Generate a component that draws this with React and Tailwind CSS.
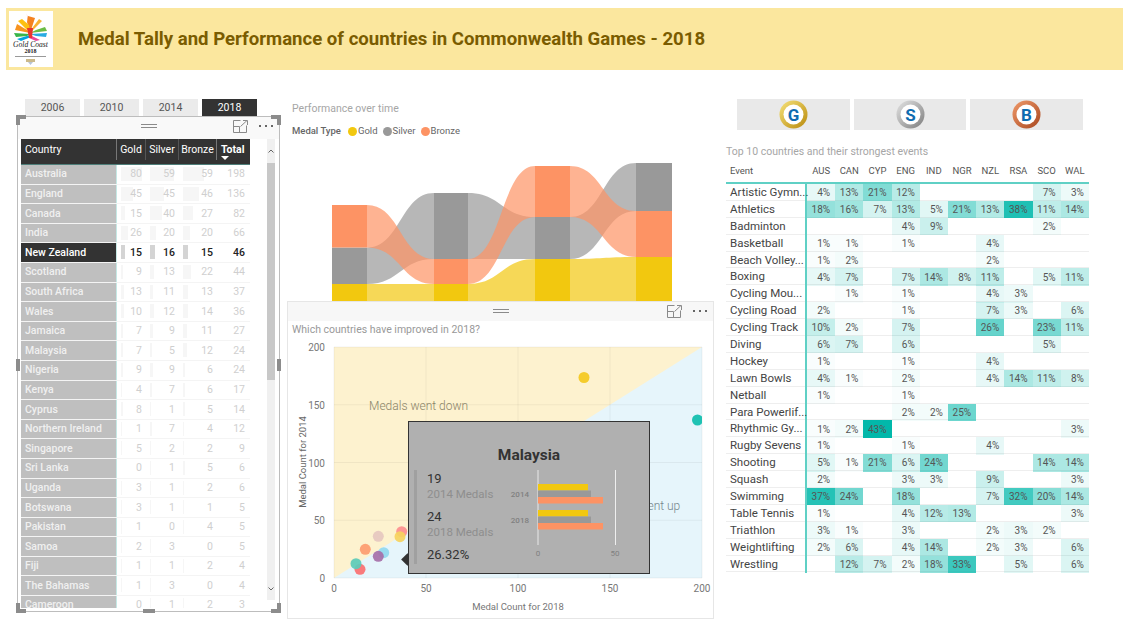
import React from "react";

const countries = [
  ["Australia", 80, 59, 59, 198], ["England", 45, 45, 46, 136], ["Canada", 15, 40, 27, 82],
  ["India", 26, 20, 20, 66], ["New Zealand", 15, 16, 15, 46], ["Scotland", 9, 13, 22, 44],
  ["South Africa", 13, 11, 13, 37], ["Wales", 10, 12, 14, 36], ["Jamaica", 7, 9, 11, 27],
  ["Malaysia", 7, 5, 12, 24], ["Nigeria", 9, 9, 6, 24], ["Kenya", 4, 7, 6, 17],
  ["Cyprus", 8, 1, 5, 14], ["Northern Ireland", 1, 7, 4, 12], ["Singapore", 5, 2, 2, 9],
  ["Sri Lanka", 0, 1, 5, 6], ["Uganda", 3, 1, 2, 6], ["Botswana", 3, 1, 1, 5],
  ["Pakistan", 1, 0, 4, 5], ["Samoa", 2, 3, 0, 5], ["Fiji", 1, 1, 2, 4],
  ["The Bahamas", 1, 3, 0, 4], ["Cameroon", 0, 1, 2, 3],
];

const codes = ["AUS", "CAN", "CYP", "ENG", "IND", "NGR", "NZL", "RSA", "SCO", "WAL"];

const events = [
  ["Artistic Gymn...", 4, 13, 21, 12, 0, 0, 0, 0, 7, 3],
  ["Athletics", 18, 16, 7, 13, 5, 21, 13, 38, 11, 14],
  ["Badminton", 0, 0, 0, 4, 9, 0, 0, 0, 2, 0],
  ["Basketball", 1, 1, 0, 1, 0, 0, 4, 0, 0, 0],
  ["Beach Volley...", 1, 2, 0, 0, 0, 0, 2, 0, 0, 0],
  ["Boxing", 4, 7, 0, 7, 14, 8, 11, 0, 5, 11],
  ["Cycling Mou...", 0, 1, 0, 1, 0, 0, 4, 3, 0, 0],
  ["Cycling Road", 2, 0, 0, 1, 0, 0, 7, 3, 0, 6],
  ["Cycling Track", 10, 2, 0, 7, 0, 0, 26, 0, 23, 11],
  ["Diving", 6, 7, 0, 6, 0, 0, 0, 0, 5, 0],
  ["Hockey", 1, 0, 0, 1, 0, 0, 4, 0, 0, 0],
  ["Lawn Bowls", 4, 1, 0, 2, 0, 0, 4, 14, 11, 8],
  ["Netball", 1, 0, 0, 1, 0, 0, 0, 0, 0, 0],
  ["Para Powerlif...", 0, 0, 0, 2, 2, 25, 0, 0, 0, 0],
  ["Rhythmic Gy...", 1, 2, 43, 0, 0, 0, 0, 0, 0, 3],
  ["Rugby Sevens", 1, 0, 0, 1, 0, 0, 4, 0, 0, 0],
  ["Shooting", 5, 1, 21, 6, 24, 0, 0, 0, 14, 14],
  ["Squash", 2, 0, 0, 3, 3, 0, 9, 0, 0, 3],
  ["Swimming", 37, 24, 0, 18, 0, 0, 7, 32, 20, 14],
  ["Table Tennis", 1, 0, 0, 4, 12, 13, 0, 0, 0, 3],
  ["Triathlon", 3, 1, 0, 3, 0, 0, 2, 3, 2, 0],
  ["Weightlifting", 2, 6, 0, 4, 14, 0, 2, 3, 0, 6],
  ["Wrestling", 0, 12, 7, 2, 18, 33, 0, 5, 0, 6],
];

const ribbon = (x1, a1, b1, x2, a2, b2) => {
  const m = (x1 + x2) / 2;
  return `M${x1} ${a1}C${m} ${a1} ${m} ${a2} ${x2} ${a2}L${x2} ${b2}C${m} ${b2} ${m} ${b1} ${x1} ${b1}Z`;
};

const GOLD = "#f2c80f";
const SILVER = "#999999";
const BRONZE = "#fd9364";

const ribbonCols = [
  { x: 332, w: 35, gold: [284, 301], silver: [247.5, 284], bronze: [205, 247.5] },
  { x: 434, w: 34, gold: [284, 301], silver: [193, 259], bronze: [259, 284] },
  { x: 535, w: 35, gold: [259, 301], silver: [217, 259], bronze: [166, 217] },
  { x: 636, w: 36, gold: [257, 301], silver: [163, 211], bronze: [211, 257] },
];

function FocusIcon() {
  return (
    <svg width="15" height="13" viewBox="0 0 15 13" fill="none" stroke="#8a8a8a" strokeWidth="1">
      <path d="M7.5.5H.5v12h13V5.5" />
      <path d="M.5 6.5h6v6" />
      <path d="M7.5 6.5 14 .5M10 .5h4.5V5" />
    </svg>
  );
}

function VisualMenu({ handleLeft }) {
  return (
    <div className="relative h-full w-full">
      <div className={`absolute top-[7px] h-[4px] w-[16px] border-y border-[#8a8a8a] ${handleLeft}`}></div>
      <div className="absolute right-[31px] top-[3px]"><FocusIcon /></div>
      <div className="absolute right-[6px] top-[8px] flex gap-[4px]">
        <span className="h-[2px] w-[2px] bg-[#666]"></span>
        <span className="h-[2px] w-[2px] bg-[#666]"></span>
        <span className="h-[2px] w-[2px] bg-[#666]"></span>
      </div>
    </div>
  );
}

function Logo() {
  return (
    <svg width="44" height="56" viewBox="0 0 44 56">
      <rect width="44" height="56" fill="#fff" />
      <polygon points="21,22 17.5,2 20,11" fill="#f4a9a0" />
      <polygon points="21,22 18,11 19,5 26,7" fill="#f58220" />
      <polygon points="21,22 9,10 13,8 20,14" fill="#fdc010" />
      <polygon points="21,22 24,16 30,8 33,10" fill="#f9b233" />
      <polygon points="21,22 6,19 8,13 18,19" fill="#f7931e" />
      <polygon points="21,23 5,22 7,26 18,25" fill="#39b54a" />
      <polygon points="21,24 8,28 12,30 22,26" fill="#00a3e0" />
      <polygon points="21,22 38,20 36,16 27,19" fill="#6cbd45" />
      <polygon points="21,23 38,22 37,26 27,25" fill="#29abe2" />
      <polygon points="21,24 31,29 27,30 20,27" fill="#ec4899" />
      <polygon points="18,17 24,17 23,27 20,27" fill="#e8352e" />
      <text x="21.5" y="36" textAnchor="middle" fontSize="7.6" fontStyle="italic" fontFamily="'Liberation Serif', serif" fill="#222">Gold Coast</text>
      <text x="21.5" y="42" textAnchor="middle" fontSize="6" fontWeight="700" fontFamily="'Liberation Serif', serif" fill="#222">2018</text>
      <rect x="6" y="45" width="31" height="1" fill="#999" />
      <rect x="17" y="48" width="9" height="3" fill="#cbb98a" />
      <polygon points="19,51 24,51 21.5,54" fill="#b8c4d6" />
    </svg>
  );
}

function CountryRow({ row }) {
  const [name, gold, silver, bronze, total] = row;
  const selected = name === "New Zealand";
  const numColor = selected ? "text-[#222] font-medium" : "text-[#cfcfcf]";
  const barColor = selected ? "bg-[#d4d4d4]" : "bg-[#f6f6f6]";
  const bars = [
    [gold, gold * 0.26, 4],
    [silver, silver === 59 ? 24 : silver * 0.3, 4],
    [bronze, bronze * 0.355, 4],
  ];
  return (
    <div className="grid h-[19.6px] shrink-0 grid-cols-[96px_29px_33px_38px_33px] border-b border-[#f4f4f4]">
      <div className={`flex items-center border-r border-[#c5e8e5] pl-[4px] text-[10.5px] font-medium ${selected ? "bg-[#333] text-white" : "bg-[#bfbfbf] text-[#f0f0f0]"}`}>
        {name}
      </div>
      {bars.map(([value, width, left], i) => (
        <div key={i} className={`relative flex items-center justify-end pr-[4px] text-[10.5px] ${numColor}`}>
          <span className={`absolute top-[2px] h-[14px] ${barColor}`} style={{ left, width }}></span>
          <span className="relative">{value}</span>
        </div>
      ))}
      <div className={`flex items-center justify-end pr-[5px] text-[10.5px] ${numColor}`}>{total}</div>
    </div>
  );
}

function Slicer() {
  const years = ["2006", "2010", "2014", "2018"];
  return (
    <div className="w-[287px] pl-[17px] pt-[29px]">
      <div className="ml-[8px] flex gap-[4px]">
        {years.map((y) => (
          <div key={y} className={`flex h-[18px] w-[55px] items-center justify-center text-[10.5px] ${y === "2018" ? "bg-[#333] text-white" : "bg-[#ebebeb] text-[#555]"}`}>
            {y}
          </div>
        ))}
      </div>
      <div className="relative -mt-[1px] flex h-[496px] w-[263px] flex-col border border-[#bdbdbd] bg-white">
        {/* handles */}
        <span className="absolute -left-[2px] -top-[2px] h-[10px] w-[10px] border-l-[4px] border-t-[4px] border-[#8c8c8c]"></span>
        <span className="absolute -right-[2px] -top-[2px] h-[10px] w-[10px] border-r-[4px] border-t-[4px] border-[#8c8c8c]"></span>
        <span className="absolute -bottom-[2px] -left-[2px] h-[10px] w-[10px] border-b-[4px] border-l-[4px] border-[#8c8c8c]"></span>
        <span className="absolute -bottom-[2px] -right-[2px] h-[10px] w-[10px] border-b-[4px] border-r-[4px] border-[#8c8c8c]"></span>
        <span className="absolute -left-[2px] top-[242px] h-[12px] w-[4px] bg-[#8c8c8c]"></span>
        <span className="absolute -right-[2px] top-[242px] h-[12px] w-[4px] bg-[#8c8c8c]"></span>
        <span className="absolute -bottom-[2px] left-[125px] h-[4px] w-[12px] bg-[#8c8c8c]"></span>

        <div className="h-[22px] shrink-0 bg-[#f9f9f9]">
          <VisualMenu handleLeft="left-[123px]" />
        </div>
        <div className="flex min-h-0 flex-1 pl-[3px] pr-[3px]">
          <div className="h-[469px] w-[229px] overflow-hidden">
            <div className="grid h-[26px] grid-cols-[96px_29px_33px_38px_33px] border-b border-[#4f7f7a] bg-[#333] pb-[4px] text-[10.5px] text-white">
              <div className="flex items-center border-r border-[#777] pl-[4px]">Country</div>
              <div className="flex items-center justify-center border-r border-[#555]">Gold</div>
              <div className="flex items-center justify-center border-r border-[#555]">Silver</div>
              <div className="flex items-center justify-center border-r border-[#777]">Bronze</div>
              <div className="relative pl-[4px] pt-[4px] font-bold leading-[13px]">
                Total
                <span className="absolute left-[4px] top-[17px] h-0 w-0 border-x-[4px] border-t-[4px] border-x-transparent border-t-white"></span>
              </div>
            </div>
            <div className="flex flex-col">
              {countries.map((c) => (
                <CountryRow key={c[0]} row={c} />
              ))}
            </div>
          </div>
          <div className="ml-[17px] flex h-[461px] w-[8px] flex-col bg-[#f0f0f0]">
            <div className="flex h-[24px] items-center justify-center">
              <svg width="6" height="4" viewBox="0 0 6 4" fill="none" stroke="#666"><path d="M.5 3.5 3 1l2.500 2.500" /></svg>
            </div>
            <div className="h-[217px] bg-[#c8c8c8]"></div>
            <div className="flex-1"></div>
            <div className="flex h-[22px] items-center justify-center">
              <svg width="6" height="4" viewBox="0 0 6 4" fill="none" stroke="#666"><path d="M.5.5 3 3l2.500-2.500" /></svg>
            </div>
          </div>
        </div>
      </div>
    </div>
  );
}

function RibbonChart() {
  const series = ["gold", "silver", "bronze"];
  const colors = { gold: GOLD, silver: SILVER, bronze: BRONZE };
  return (
    <svg width="427" height="151" viewBox="287 150 427 151" className="block">
      {ribbonCols.slice(0, 3).map((c, i) => {
        const n = ribbonCols[i + 1];
        return series.map((s) => (
          <path key={s + i} d={ribbon(c.x + c.w, c[s][0], c[s][1], n.x, n[s][0], n[s][1])} fill={colors[s]} fillOpacity="0.7" />
        ));
      })}
      {ribbonCols.map((c) =>
        series.map((s) => (
          <rect key={s + c.x} x={c.x} y={c[s][0]} width={c.w} height={c[s][1] - c[s][0]} fill={colors[s]} />
        ))
      )}
    </svg>
  );
}

function ScatterChart() {
  const X = (v) => 334 + (v / 200) * 368;
  const Y = (v) => 578 - (v / 200) * 231;
  const ticks = [0, 50, 100, 150, 200];
  const dots = [
    [401.7, 531.7, "#fd8f8f"], [378.3, 536.3, "#e6c8c0"], [400, 536.7, "#f6d25e"],
    [365.3, 549.3, "#fd9c70"], [383.7, 552.7, "#93d8ef"], [378.3, 556.3, "#a66fa8"],
    [360, 569.3, "#fb6f70"], [356, 563.7, "#5ccbb8"],
  ];
  return (
    <svg width="425" height="281" viewBox="288 338 425 281" className="block" fontFamily="Roboto, sans-serif">
      <defs>
        <clipPath id="plot"><rect x="334" y="347" width="368" height="231" /></clipPath>
      </defs>
      <rect x="334" y="347" width="368" height="231" fill="#e6f5fb" />
      <polygon points="334,578 334,347 702,347" fill="#fdf2cf" />
      {ticks.map((t) => (
        <g key={t}>
          <line x1={X(t)} x2={X(t)} y1="347" y2="578" stroke="#000" strokeOpacity="0.05" />
          <line x1="334" x2="702" y1={Y(t)} y2={Y(t)} stroke="#000" strokeOpacity="0.05" />
          <text x={X(t)} y="592" textAnchor="middle" fontSize="10" fill="#777">{t}</text>
          <text x="325" y={Y(t) + 4} textAnchor="end" fontSize="10" fill="#777">{t}</text>
        </g>
      ))}
      <text x="369" y="410" fontSize="12" fontWeight="300" fill="#8a8468">Medals went down</text>
      <text x="597" y="510" fontSize="12" fontWeight="300" fill="#75868c">Medals went up</text>
      <g clipPath="url(#plot)">
        <circle cx="584" cy="377.500" r="5.500" fill="#f5cc2c" />
        <circle cx="697.500" cy="420" r="5.500" fill="#1fc2b3" />
        {dots.map(([x, y, c]) => (
          <circle key={x + "-" + y} cx={x} cy={y} r="5.500" fill={c} fillOpacity="0.92" />
        ))}
      </g>
      <text x="518" y="610" textAnchor="middle" fontSize="9.500" fill="#777">Medal Count for 2018</text>
      <text transform="translate(306 462) rotate(-90)" textAnchor="middle" fontSize="9.500" fill="#666">Medal Count for 2014</text>
    </svg>
  );
}

function TooltipChart() {
  const rows = [
    { label: "2014", y: 14 },
    { label: "2018", y: 40 },
  ];
  return (
    <svg width="130" height="95" viewBox="0 0 130 95" fontFamily="Roboto, sans-serif">
      <line x1="38" x2="38" y1="0" y2="75" stroke="#d6d6d6" strokeWidth="1.500" />
      <line x1="115.500" x2="115.500" y1="0" y2="75" stroke="#eeeeee" strokeWidth="1" />
      {rows.map((r) => (
        <g key={r.label}>
          <rect x="38" y={r.y} width="50" height="6.500" fill={GOLD} />
          <rect x="38" y={r.y + 6.500} width="53" height="6.500" fill={SILVER} />
          <rect x="38" y={r.y + 13} width="65" height="6.500" fill={BRONZE} />
          <text x="29" y={r.y + 12.500} textAnchor="end" fontSize="8" fontWeight="500" fill="#808080">{r.label}</text>
        </g>
      ))}
      <text x="38" y="86" textAnchor="middle" fontSize="8" fill="#808080">0</text>
      <text x="115" y="86" textAnchor="middle" fontSize="8" fill="#808080">50</text>
    </svg>
  );
}

function MiddleColumn() {
  const legend = [["Gold", "bg-[#f2c80f]"], ["Silver", "bg-[#999]"], ["Bronze", "bg-[#fd9364]"]];
  return (
    <div className="w-[427px]">
      <div className="pl-[5px] pt-[32px] text-[10.5px] leading-[14px] text-[#a6a6a6]">Performance over time</div>
      <div className="mt-[8px] flex h-[14px] items-center pl-[5px] text-[9.5px] text-[#666]">
        <span className="mr-[7px] font-medium">Medal Type</span>
        {legend.map(([name, color]) => (
          <span key={name} className="mr-[5px] flex items-center gap-[1px]">
            <span className={`h-[9px] w-[9px] rounded-full ${color}`}></span>
            {name}
          </span>
        ))}
      </div>
      <div className="mt-[12px]"><RibbonChart /></div>
      <div className="relative h-[318px] w-[427px] border border-[#e6e6e6] bg-white">
        <div className="h-[19px] bg-[#f7f7f7]">
          <VisualMenu handleLeft="left-[205px]" />
        </div>
        <div className="pl-[4px] pt-[2px] text-[10.5px] leading-[14px] text-[#999]">Which countries have improved in 2018?</div>
        <div className="absolute left-0 top-[36px]"><ScatterChart /></div>
        {/* tooltip */}
        <span className="absolute left-[115px] top-[253px] h-[9px] w-[9px] rotate-45 bg-[#333]"></span>
        <div className="absolute left-[120px] top-[119px] h-[153px] w-[242px] border-[1.5px] border-[#333] bg-[#b0b0b0]">
          <div className="pt-[23px] text-center text-[15.5px] font-bold leading-[20px] text-[#333]">Malaysia</div>
          <div className="mt-[5px] flex pl-[5px]">
            <div className="h-[94px] w-[3px] bg-[#a0a0a0]"></div>
            <div className="w-[82px] pl-[10px] pt-[1px] text-[#333]">
              <div className="text-[13px] leading-[16px]">19</div>
              <div className="whitespace-nowrap text-[11.5px] leading-[15px] text-[#8e8e8e]">2014 Medals</div>
              <div className="mt-[7px] text-[13px] leading-[16px]">24</div>
              <div className="whitespace-nowrap text-[11.5px] leading-[15px] text-[#8e8e8e]">2018 Medals</div>
              <div className="mt-[7px] text-[13px] leading-[16px]">26.32%</div>
            </div>
            <div className="ml-[1px]"><TooltipChart /></div>
          </div>
        </div>
      </div>
    </div>
  );
}

function MedalButton({ letter, from, to, id }) {
  return (
    <div className="flex h-[31px] flex-1 items-center justify-center bg-[#e9e9e9]">
      <svg width="29" height="29" viewBox="0 0 29 29">
        <defs>
          <linearGradient id={id} x1="0" y1="0" x2="1" y2="1">
            <stop offset="0" stopColor={from} />
            <stop offset="1" stopColor={to} />
          </linearGradient>
        </defs>
        <circle cx="14.500" cy="14.500" r="14" fill={`url(#${id})`} />
        <circle cx="14.500" cy="14.500" r="10" fill="#fff" />
        <text x="14.500" y="20.500" textAnchor="middle" fontSize="17" fontWeight="700" fontFamily="Roboto, sans-serif" fill="#0f6cb0">{letter}</text>
      </svg>
    </div>
  );
}

function Matrix() {
  return (
    <div className="w-[363px]">
      <div className="grid h-[23px] grid-cols-[81px_repeat(10,28.2px)] items-center border-b-2 border-[#5fd0c5] text-[9.5px] text-[#555]">
        <div className="pl-[4px]">Event</div>
        {codes.map((c) => (
          <div key={c} className="text-center">{c}</div>
        ))}
      </div>
      {events.map(([name, ...vals]) => (
        <div key={name} className="grid h-[16.9px] grid-cols-[81px_repeat(10,28.2px)] border-b border-[#eeeeee]">
          <div className="flex items-center whitespace-nowrap border-r-2 border-[#5fd0c5] pl-[4px] text-[11.5px] text-[#444]">{name}</div>
          {vals.map((v, i) => (
            <div key={i} className="flex items-center justify-end pr-[5px] text-[10px] text-[#555]" style={{ backgroundColor: v ? `rgba(1,184,170,${v / 43})` : "transparent" }}>
              {v ? `${v}%` : ""}
            </div>
          ))}
        </div>
      ))}
    </div>
  );
}

export default function App() {
  return (
    <div className="h-[627px] w-[1129px] overflow-hidden bg-white font-['Roboto',sans-serif]">
      <div className="pt-[8px]">
        <header className="mx-[6px] flex h-[62px] items-center bg-[#fbe79e] pl-[3px]">
          <Logo />
          <h1 className="ml-[25px] pt-[2px] text-[18.6px] font-bold text-[#7a5c00]">Medal Tally and Performance of countries in Commonwealth Games - 2018</h1>
        </header>
      </div>
      <div className="flex">
        <Slicer />
        <MiddleColumn />
        <div className="ml-[12px] w-[363px] pt-[29px]">
          <div className="ml-[11px] flex w-[346px] gap-[4px]">
            <MedalButton letter="G" from="#f6e27a" to="#b98a0c" id="ringG" />
            <MedalButton letter="S" from="#e4e4e4" to="#7d7d7d" id="ringS" />
            <MedalButton letter="B" from="#f09a6a" to="#a8471f" id="ringB" />
          </div>
          <div className="pt-[15px] text-[10.5px] leading-[14px] text-[#a6a6a6]">Top 10 countries and their strongest events</div>
          <div className="mt-[2px]"><Matrix /></div>
        </div>
      </div>
    </div>
  );
}
